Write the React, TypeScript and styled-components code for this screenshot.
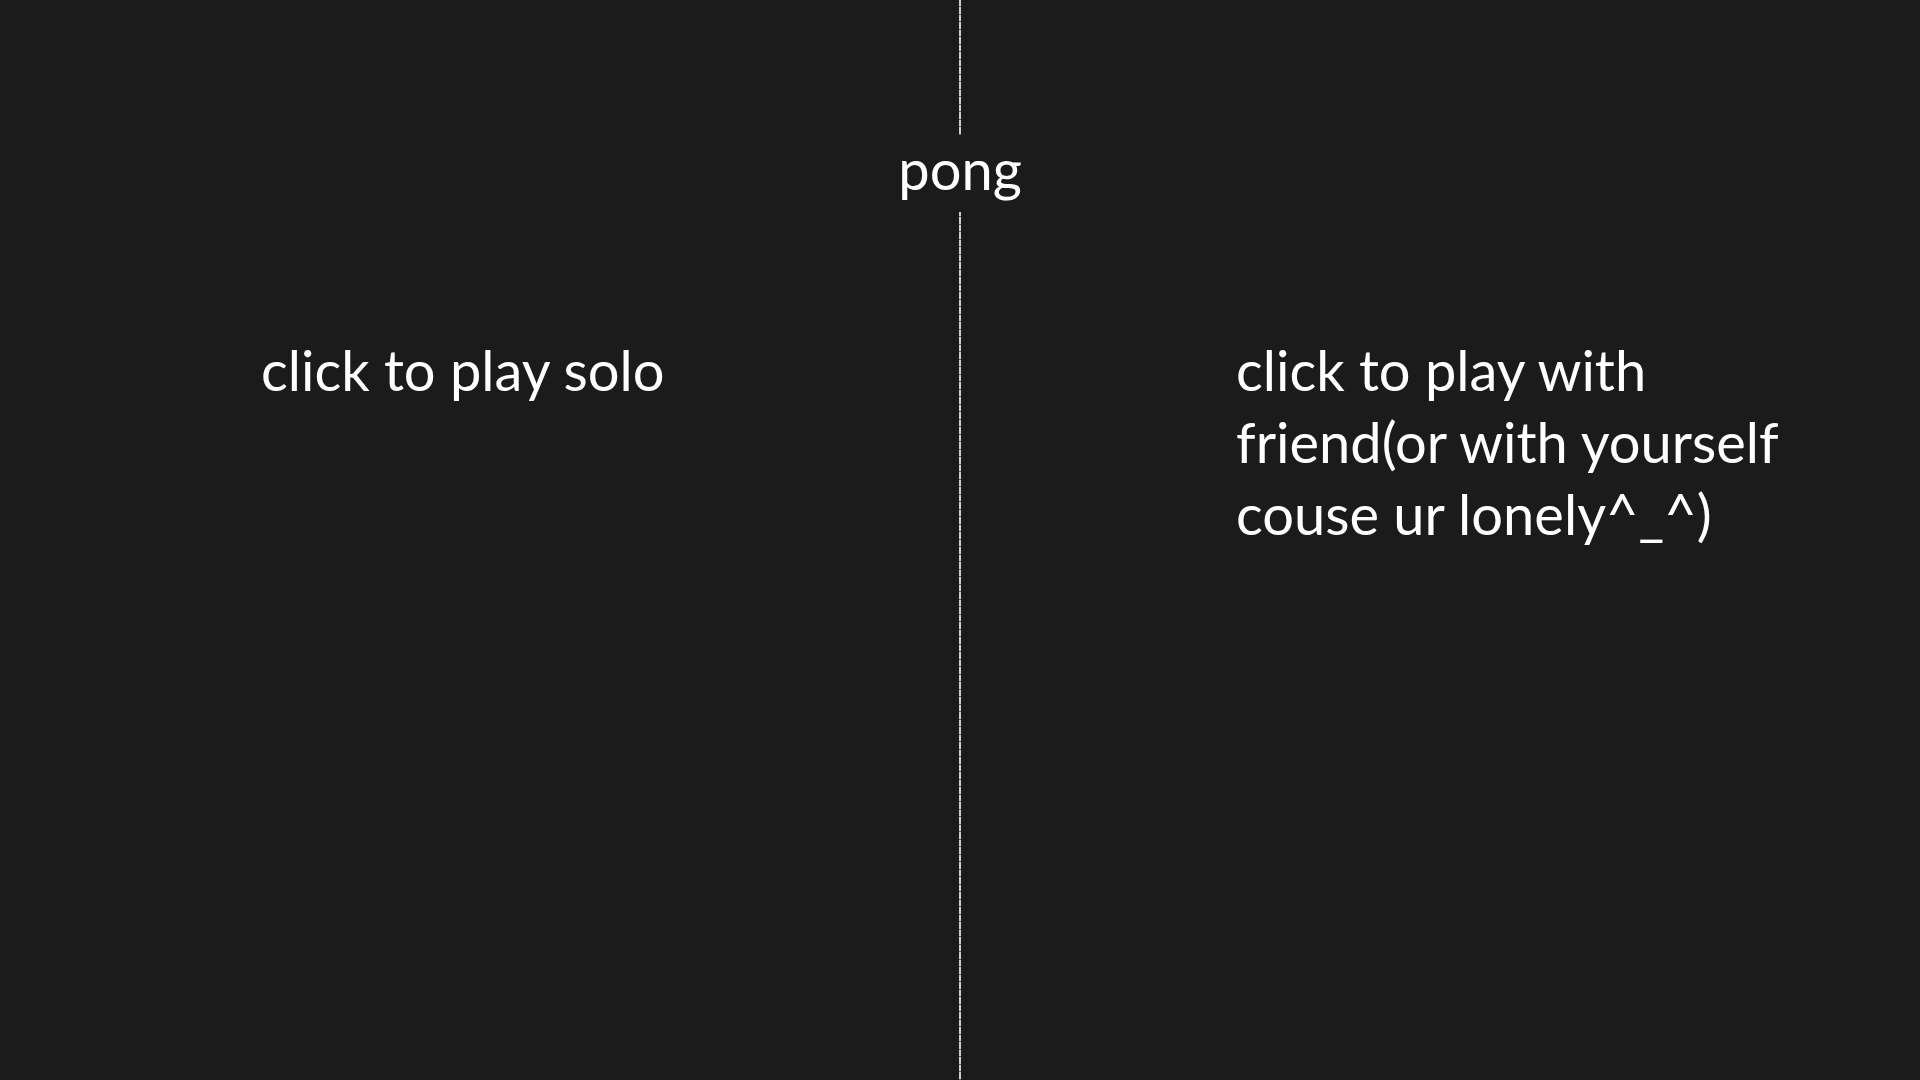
import React from "react";
import styled, { createGlobalStyle } from "styled-components";

const Global = createGlobalStyle`
  html, body { margin: 0; padding: 0; background: #1b1b1b; }
  body { font-family: Lato, "Open Sans", sans-serif; }
`;

const Page = styled.div`
  position: relative;
  width: 1920px;
  height: 1080px;
  overflow: hidden;
  background: #1b1b1b;
  display: grid;
  grid-template-columns: 959px 2px 959px;
  color: #ffffff;
`;

const Half = styled.div<{ $left: number }>`
  padding-top: 334px;
  padding-left: ${(p) => p.$left}px;
  cursor: pointer;
`;

const Divider = styled.div`
  background: repeating-linear-gradient(
    to bottom,
    #cfcfcf 0px,
    #cfcfcf 6.5px,
    #5a5a5a 6.5px,
    #5a5a5a 7.5px
  );
`;

const Option = styled.p`
  margin: 0;
  font-size: 56px;
  line-height: 72px;
  font-weight: 400;
`;

const Title = styled.h1`
  position: absolute;
  top: 135px;
  left: 50%;
  transform: translateX(-50%);
  margin: 0;
  padding: 4px 24px 13px;
  background: #1b1b1b;
  font-size: 56px;
  line-height: 60px;
  font-weight: 400;
`;

export default function App() {
  return (
    <>
      <Global />
      <Page>
        <Half $left={261}>
          <Option>click to play solo</Option>
        </Half>
        <Divider />
        <Half $left={275}>
          <Option>
            click to play with
            <br />
            friend(or with yourself
            <br />
            couse ur lonely^_^)
          </Option>
        </Half>
        <Title>pong</Title>
      </Page>
    </>
  );
}
